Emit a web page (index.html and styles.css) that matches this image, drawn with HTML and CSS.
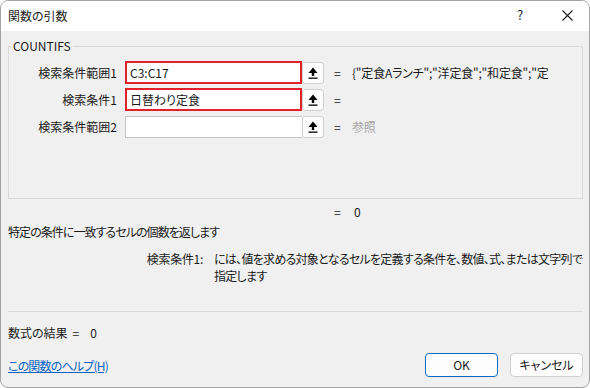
FILE: index.html
```html
<!DOCTYPE html>
<html lang="ja">
<head>
<meta charset="utf-8">
<title>関数の引数</title>
<link rel="stylesheet" href="styles.css">
</head>
<body>
<div class="window">
  <div class="titlebar">
    <span class="title">関数の引数</span>
    <span class="help">?</span>
    <span class="close"><svg width="11" height="11" viewBox="0 0 11 11"><path d="M0.5 0.5 L10.5 10.5 M10.5 0.5 L0.5 10.5" stroke="#1a1a1a" stroke-width="1.1" fill="none"/></svg></span>
  </div>
  <div class="content">
    <fieldset class="group">
      <legend class="legend">COUNTIFS</legend>
      <div class="args">
        <span class="label">検索条件範囲1</span>
        <div class="input hl">C3:C17</div>
        <span class="ref"><svg width="10" height="12" viewBox="0 0 10 12"><path d="M5 0.5 L9.5 6 L6.2 6 L6.2 9 L3.8 9 L3.8 6 L0.5 6 Z" fill="#000"/><rect x="0.5" y="10.5" width="9" height="1.3" fill="#000"/></svg></span>
        <span class="eq">=</span>
        <span class="val">{"定食Aランチ";"洋定食";"和定食";"定食Aランチ";"日替わり定食"}</span>

        <span class="label">検索条件1</span>
        <div class="input hl">日替わり定食</div>
        <span class="ref"><svg width="10" height="12" viewBox="0 0 10 12"><path d="M5 0.5 L9.5 6 L6.2 6 L6.2 9 L3.8 9 L3.8 6 L0.5 6 Z" fill="#000"/><rect x="0.5" y="10.5" width="9" height="1.3" fill="#000"/></svg></span>
        <span class="eq">=</span>
        <span class="val"></span>

        <span class="label">検索条件範囲2</span>
        <div class="input"></div>
        <span class="ref"><svg width="10" height="12" viewBox="0 0 10 12"><path d="M5 0.5 L9.5 6 L6.2 6 L6.2 9 L3.8 9 L3.8 6 L0.5 6 Z" fill="#000"/><rect x="0.5" y="10.5" width="9" height="1.3" fill="#000"/></svg></span>
        <span class="eq">=</span>
        <span class="val muted">参照</span>
      </div>
    </fieldset>

    <div class="total"><span class="eq">=</span><span class="total-val">0</span></div>

    <p class="fdesc">特定の条件に一致するセルの個数を返します</p>

    <div class="argdesc">
      <span class="argname">検索条件1:</span>
      <span class="argtext">には、値を求める対象となるセルを定義する条件を、数値、式、または文字列で<br>指定します</span>
    </div>

    <div class="sep"></div>

    <div class="formula"><span>数式の結果</span><span class="f-eq">=</span><span class="f-val">0</span></div>

    <div class="footer">
      <a class="helplink" href="#">この関数のヘルプ(H)</a>
      <div class="buttons">
        <button class="btn primary">OK</button>
        <button class="btn">キャンセル</button>
      </div>
    </div>
  </div>
</div>
</body>
</html>
```

FILE: styles.css
```css
* { box-sizing: border-box; }

html, body {
  margin: 0;
  padding: 0;
  background: #ffffff;
}

body {
  font-family: "Noto Sans CJK JP", "Noto Sans", sans-serif;
  font-size: 12px;
  line-height: 16px;
  color: #1a1a1a;
  font-feature-settings: "palt";
}

.window {
  width: 590px;
  height: 388px;
  border: 1px solid #a4a4a4;
  border-radius: 8px;
  overflow: hidden;
  background: #f0f0f0;
  display: flex;
  flex-direction: column;
}

.titlebar {
  height: 30px;
  background: #ffffff;
  display: flex;
  align-items: center;
  padding-left: 7px;
  flex: none;
}

.title { flex: 1; margin-top: -1px; }

.help {
  width: 12px;
  margin-right: 33px;
  font-size: 13px;
  margin-top: -2px;
}

.close {
  display: flex;
  margin-right: 16px;
  margin-top: -1px;
}

.content {
  flex: 1;
  padding: 0 6px 0 7px;
  display: flex;
  flex-direction: column;
}

.group {
  margin: 7px 0 0 0;
  padding: 8px 0 60px 0;
  border: 1px solid #d9d9d9;
  min-width: 0;
}

.legend {
  padding: 0 2px;
  margin-left: 2px;
  line-height: 16px;
}

.args {
  display: grid;
  grid-template-columns: 116px 177px 22px 10px 18px 196px;
  grid-auto-rows: 22px;
  row-gap: 5px;
  align-items: center;
}

.label {
  grid-column: 1;
  text-align: right;
  padding-right: 8px;
  white-space: nowrap;
}

.input {
  grid-column: 2;
  height: 22px;
  background: #ffffff;
  border: 1px solid #c4c4c4;
  border-right: none;
  padding: 0 4px;
  line-height: 20px;
  white-space: nowrap;
  overflow: hidden;
}

.input.hl {
  border: 2px solid #e3212b;
  height: 23px;
  margin-top: -1px;
  padding: 0 3px;
  line-height: 19px;
}

.ref {
  grid-column: 3;
  height: 22px;
  background: #fdfdfd;
  border: 1px solid #cfcfcf;
  border-radius: 3px;
  display: flex;
  align-items: center;
  justify-content: center;
}

.eq {
  grid-column: 5;
}

.val {
  grid-column: 6;
  white-space: nowrap;
  overflow: hidden;
  letter-spacing: -0.2px;
}

.muted { color: #a3a3a3; }

.total {
  display: flex;
  margin-top: 5px;
  padding-left: 326px;
}

.total .eq { width: 20px; }

.fdesc {
  margin: 4px 0 0 0;
  letter-spacing: -0.95px;
}

.argdesc {
  display: flex;
  margin-top: 10px;
  line-height: 17px;
}

.argname {
  width: 206px;
  text-align: right;
  padding-right: 11px;
  flex: none;
  white-space: nowrap;
  letter-spacing: -0.3px;
}

.argtext {
  flex: 1;
  white-space: nowrap;
  letter-spacing: -0.72px;
}

.sep {
  height: 1px;
  background: #d9d9d9;
  margin-top: 27px;
}

.formula {
  display: flex;
  margin-top: 13px;
}

.f-eq { margin-left: 5px; }
.f-val { margin-left: 11px; }

.footer {
  display: flex;
  align-items: center;
  justify-content: space-between;
  margin-top: 12px;
}

.helplink {
  color: #0b62c4;
  text-decoration: underline;
  margin-top: 2px;
  letter-spacing: -0.8px;
}

.buttons {
  display: flex;
  gap: 12px;
}

.btn {
  width: 73px;
  height: 24px;
  font: inherit;
  font-size: 12px;
  color: #1a1a1a;
  background: #fdfdfd;
  border: 1px solid #d0d0d0;
  border-radius: 4px;
  padding: 0;
}

.btn.primary {
  border-color: #0a67c3;
}
```
